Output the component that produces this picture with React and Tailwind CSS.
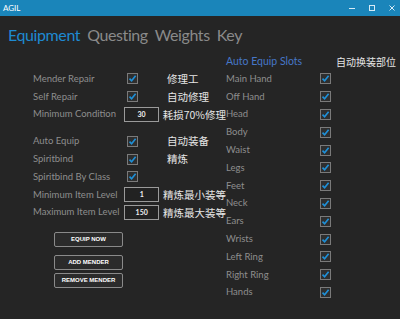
import React from "react";

const latin = { fontFamily: 'Lato, "Open Sans", sans-serif' };
const cjk = { fontFamily: '"Noto Sans CJK SC", "Noto Sans", sans-serif' };

function Check() {
  return (
    <span className="flex h-[11px] w-[11px] items-center justify-center border border-[#7a7a7a] bg-[#2e2e2e]">
      <svg width="9" height="9" viewBox="0 0 9 9">
        <path d="M1.5 4.6 L3.6 6.8 L7.6 1.8" fill="none" stroke="#1e90d8" strokeWidth="1.6" />
      </svg>
    </span>
  );
}

function Input({ value }) {
  return (
    <span className="flex h-[15px] w-[35px] items-center justify-center border border-[#9a9a9a] bg-[#222222] text-[7px] font-bold text-[#f0f0f0]" style={latin}>
      {value}
    </span>
  );
}

function LeftRow({ label, control, cn }) {
  return (
    <div className="flex h-[17.8px] items-center">
      <span className="w-[94px] whitespace-nowrap text-[9.5px] text-[#8e8e8e]" style={latin}>{label}</span>
      <span className="flex w-[40px] items-center">{control}</span>
      {cn && (
        <span className="whitespace-nowrap text-[10.5px] text-[#e6e6e6]" style={cjk}>{cn}</span>
      )}
    </div>
  );
}

function Btn({ children, className = "" }) {
  return (
    <div className={"ml-[21px] flex h-[15px] w-[69px] items-center justify-center rounded-[2px] border border-[#8a8a8a] bg-[#2b2b2b] text-[6px] font-bold text-white " + className} style={{ fontFamily: '"Liberation Sans", Arial, sans-serif' }}>
      {children}
    </div>
  );
}

const slots = ["Main Hand", "Off Hand", "Head", "Body", "Waist", "Legs", "Feet", "Neck", "Ears", "Wrists", "Left Ring", "Right Ring", "Hands"];

export default function App() {
  return (
    <div className="flex h-[319px] w-[400px] flex-col overflow-hidden bg-[#252525]">
      <div className="flex h-[16px] items-center justify-between bg-[#1a85ba] pl-[3px] pr-[5px]">
        <span className="text-[8px] text-white" style={latin}>AGIL</span>
        <div className="flex items-center gap-[14px]">
          <svg width="6" height="6" viewBox="0 0 6 6"><path d="M0 3.5 H6" stroke="#d6ebf6" strokeWidth="1" /></svg>
          <svg width="6" height="6" viewBox="0 0 6 6"><rect x="0.5" y="0.5" width="5" height="5" fill="none" stroke="#d6ebf6" strokeWidth="1" /></svg>
          <svg width="6" height="6" viewBox="0 0 6 6"><path d="M0.5 0.5 L5.5 5.5 M5.5 0.5 L0.5 5.5" stroke="#d6ebf6" strokeWidth="1" /></svg>
        </div>
      </div>
      <div className="flex h-[37px] items-center pl-[8px] text-[16px] tracking-[-0.4px]" style={latin}>
        <span className="text-[#1e8ad2]">Equipment</span>
        <span className="ml-[7px] text-[#8a8a8a]">Questing</span>
        <span className="ml-[7px] text-[#8a8a8a]">Weights</span>
        <span className="ml-[7px] text-[#8a8a8a]">Key</span>
      </div>
      <div className="flex">
        <div className="flex w-[226px] flex-col pl-[33px]">
          <div className="h-[17px]" />
          <LeftRow label="Mender Repair" control={<Check />} cn="修理工" />
          <LeftRow label="Self Repair" control={<Check />} cn="自动修理" />
          <LeftRow label="Minimum Condition" control={<Input value="30" />} cn="耗损70%修理" />
          <div className="h-[9px]" />
          <LeftRow label="Auto Equip" control={<Check />} cn="自动装备" />
          <LeftRow label="Spiritbind" control={<Check />} cn="精炼" />
          <LeftRow label="Spiritbind By Class" control={<Check />} />
          <LeftRow label="Minimum Item Level" control={<Input value="1" />} cn="精炼最小装等" />
          <LeftRow label="Maximum Item Level" control={<Input value="150" />} cn="精炼最大装等" />
          <Btn className="mt-[11px]">EQUIP NOW</Btn>
          <Btn className="mt-[8px]">ADD MENDER</Btn>
          <Btn className="mt-[3px]">REMOVE MENDER</Btn>
        </div>
        <div className="flex flex-col">
          <div className="flex h-[17px] items-center">
            <span className="w-[110px] whitespace-nowrap text-[10.5px] text-[#4677c8]" style={latin}>Auto Equip Slots</span>
            <span className="whitespace-nowrap text-[10px] text-[#e6e6e6]" style={cjk}>自动换装部位</span>
          </div>
          {slots.map((s) => (
            <div key={s} className="flex h-[17.8px] items-center">
              <span className="w-[94px] whitespace-nowrap text-[9.5px] text-[#8e8e8e]" style={latin}>{s}</span>
              <Check />
            </div>
          ))}
        </div>
      </div>
    </div>
  );
}
